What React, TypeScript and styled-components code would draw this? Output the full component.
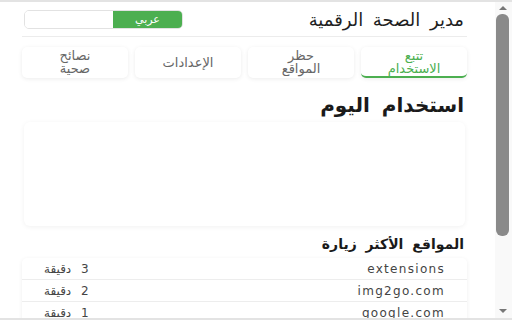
import React from 'react'
import styled, { createGlobalStyle } from 'styled-components'

type Site = { domain: string; minutes: number }

const tabs = [
  { label: 'تتبع الاستخدام', active: true },
  { label: 'حظر المواقع', active: false },
  { label: 'الإعدادات', active: false },
  { label: 'نصائح صحية', active: false },
]

const sites: Site[] = [
  { domain: 'extensions', minutes: 3 },
  { domain: 'img2go.com', minutes: 2 },
  { domain: 'google.com', minutes: 1 },
  { domain: 'youtube.com', minutes: 1 },
]

const App = () => {
  return (
    <>
      <GlobalStyle />
      <Frame>
        <Page dir="rtl">
          <Header>
            <Title>مدير الصحة الرقمية</Title>
            <LangToggle>
              <LangOption active>عربي</LangOption>
              <LangOption />
            </LangToggle>
          </Header>

          <Tabs>
            {tabs.map((tab) => (
              <Tab key={tab.label} active={tab.active}>
                {tab.label}
              </Tab>
            ))}
          </Tabs>

          <SectionTitle>استخدام اليوم</SectionTitle>
          <ChartCard />

          <SubTitle>المواقع الأكثر زيارة</SubTitle>
          <SiteList>
            {sites.map((site) => (
              <SiteRow key={site.domain}>
                <Domain>{site.domain}</Domain>
                <Time>{site.minutes} دقيقة</Time>
              </SiteRow>
            ))}
          </SiteList>
        </Page>

        {/* popup scrollbar */}
        <ScrollBar>
          <Arrow dir="up" />
          <Track>
            <Thumb />
          </Track>
          <Arrow dir="down" />
        </ScrollBar>
      </Frame>
    </>
  )
}

const GlobalStyle = createGlobalStyle`
  html,
  body {
    margin: 0;
    background: #ffffff;
  }

  body {
    font-family: 'DejaVu Sans', 'Noto Sans', sans-serif;
    color: #222;
  }
`

const Frame = styled.div`
  display: flex;

  box-sizing: border-box;
  height: 320px;
  overflow: hidden;

  border-top: 2px solid #e3e3e3;
  border-bottom: 2px solid #e3e3e3;
`

const Page = styled.div`
  flex: 1;
  min-width: 0;

  padding: 0 28px 24px 22px;
`

const ScrollBar = styled.div`
  display: flex;
  flex-direction: column;
  align-items: center;

  flex: 0 0 17px;
  padding: 0 3px 0 1px;
  box-sizing: border-box;

  background: #f9f9f9;
`

const Track = styled.div`
  flex: 1;
  width: 100%;
`

const Thumb = styled.div`
  margin-top: 1px;
  height: 222px;

  background: #8a8a8a;
  border-radius: 6px;
`

const Arrow = styled.div<{ dir: 'up' | 'down' }>`
  flex: 0 0 auto;

  margin: ${(p) => (p.dir === 'up' ? '4px 0 3px' : '4px 0 5px')};
  width: 0;
  height: 0;

  border-left: 4px solid transparent;
  border-right: 4px solid transparent;
  ${(p) =>
    p.dir === 'up' ? 'border-bottom: 4px solid #777;' : 'border-top: 4px solid #777;'}
`

const Header = styled.header`
  display: flex;
  justify-content: space-between;
  align-items: center;

  height: 34px;

  border-bottom: 1px solid #ececec;
`

const Title = styled.h1`
  margin: 0 3px 0 0;

  font-size: 18px;
  font-weight: normal;
  word-spacing: 4px;
  color: #1f1f1f;
`

const LangToggle = styled.div`
  display: flex;

  margin-left: 2px;
  width: 157px;
  height: 17px;

  border: 1px solid #e2e2e2;
  border-radius: 5px;
  overflow: hidden;
`

const LangOption = styled.div<{ active?: boolean }>`
  display: flex;
  align-items: center;
  justify-content: center;

  flex: ${(p) => (p.active ? '0 0 69px' : '1')};

  font-size: 11px;
  color: #ffffff;
  background: ${(p) => (p.active ? '#4caf50' : '#ffffff')};
`

const Tabs = styled.nav`
  display: grid;
  grid-template-columns: repeat(4, 1fr);
  gap: 7px;

  margin-top: 10px;
`

const Tab = styled.div<{ active: boolean }>`
  display: flex;
  align-items: center;
  justify-content: center;

  box-sizing: border-box;
  height: 31px;
  padding: 1px 22px 0;

  font-size: 13px;
  line-height: 13px;
  text-align: center;
  color: ${(p) => (p.active ? '#4caf50' : '#666')};

  background: #ffffff;
  border-radius: 5px;
  border-bottom: 2px solid ${(p) => (p.active ? '#4caf50' : 'transparent')};
  box-shadow: 0 1px 4px rgba(0, 0, 0, 0.08);
`

const SectionTitle = styled.h2`
  margin: 16px 3px 0 0;

  font-size: 20px;
  font-weight: bold;
  line-height: 22px;
  word-spacing: 5px;
  color: #1a1a1a;
`

const ChartCard = styled.div`
  margin: 6px 2px 0 2px;
  height: 104px;

  background: #ffffff;
  border-radius: 6px;
  box-shadow: 0 1px 5px rgba(0, 0, 0, 0.06);
`

const SubTitle = styled.h3`
  margin: 10px 3px 6px 0;

  font-size: 14px;
  font-weight: bold;
  line-height: 16px;
  word-spacing: 4px;
  color: #1a1a1a;
`

const SiteList = styled.div`
  background: #ffffff;
  border-radius: 5px;
  box-shadow: 0 1px 4px rgba(0, 0, 0, 0.07);
`

const SiteRow = styled.div`
  display: flex;
  justify-content: space-between;
  align-items: center;

  height: 21px;
  padding: 0 22px;

  font-size: 12px;
  color: #444;

  & + & {
    border-top: 1px solid #ededed;
  }
`

const Domain = styled.span`
  letter-spacing: 1.3px;
`

const Time = styled.span`
  word-spacing: 6px;
`

export default App
